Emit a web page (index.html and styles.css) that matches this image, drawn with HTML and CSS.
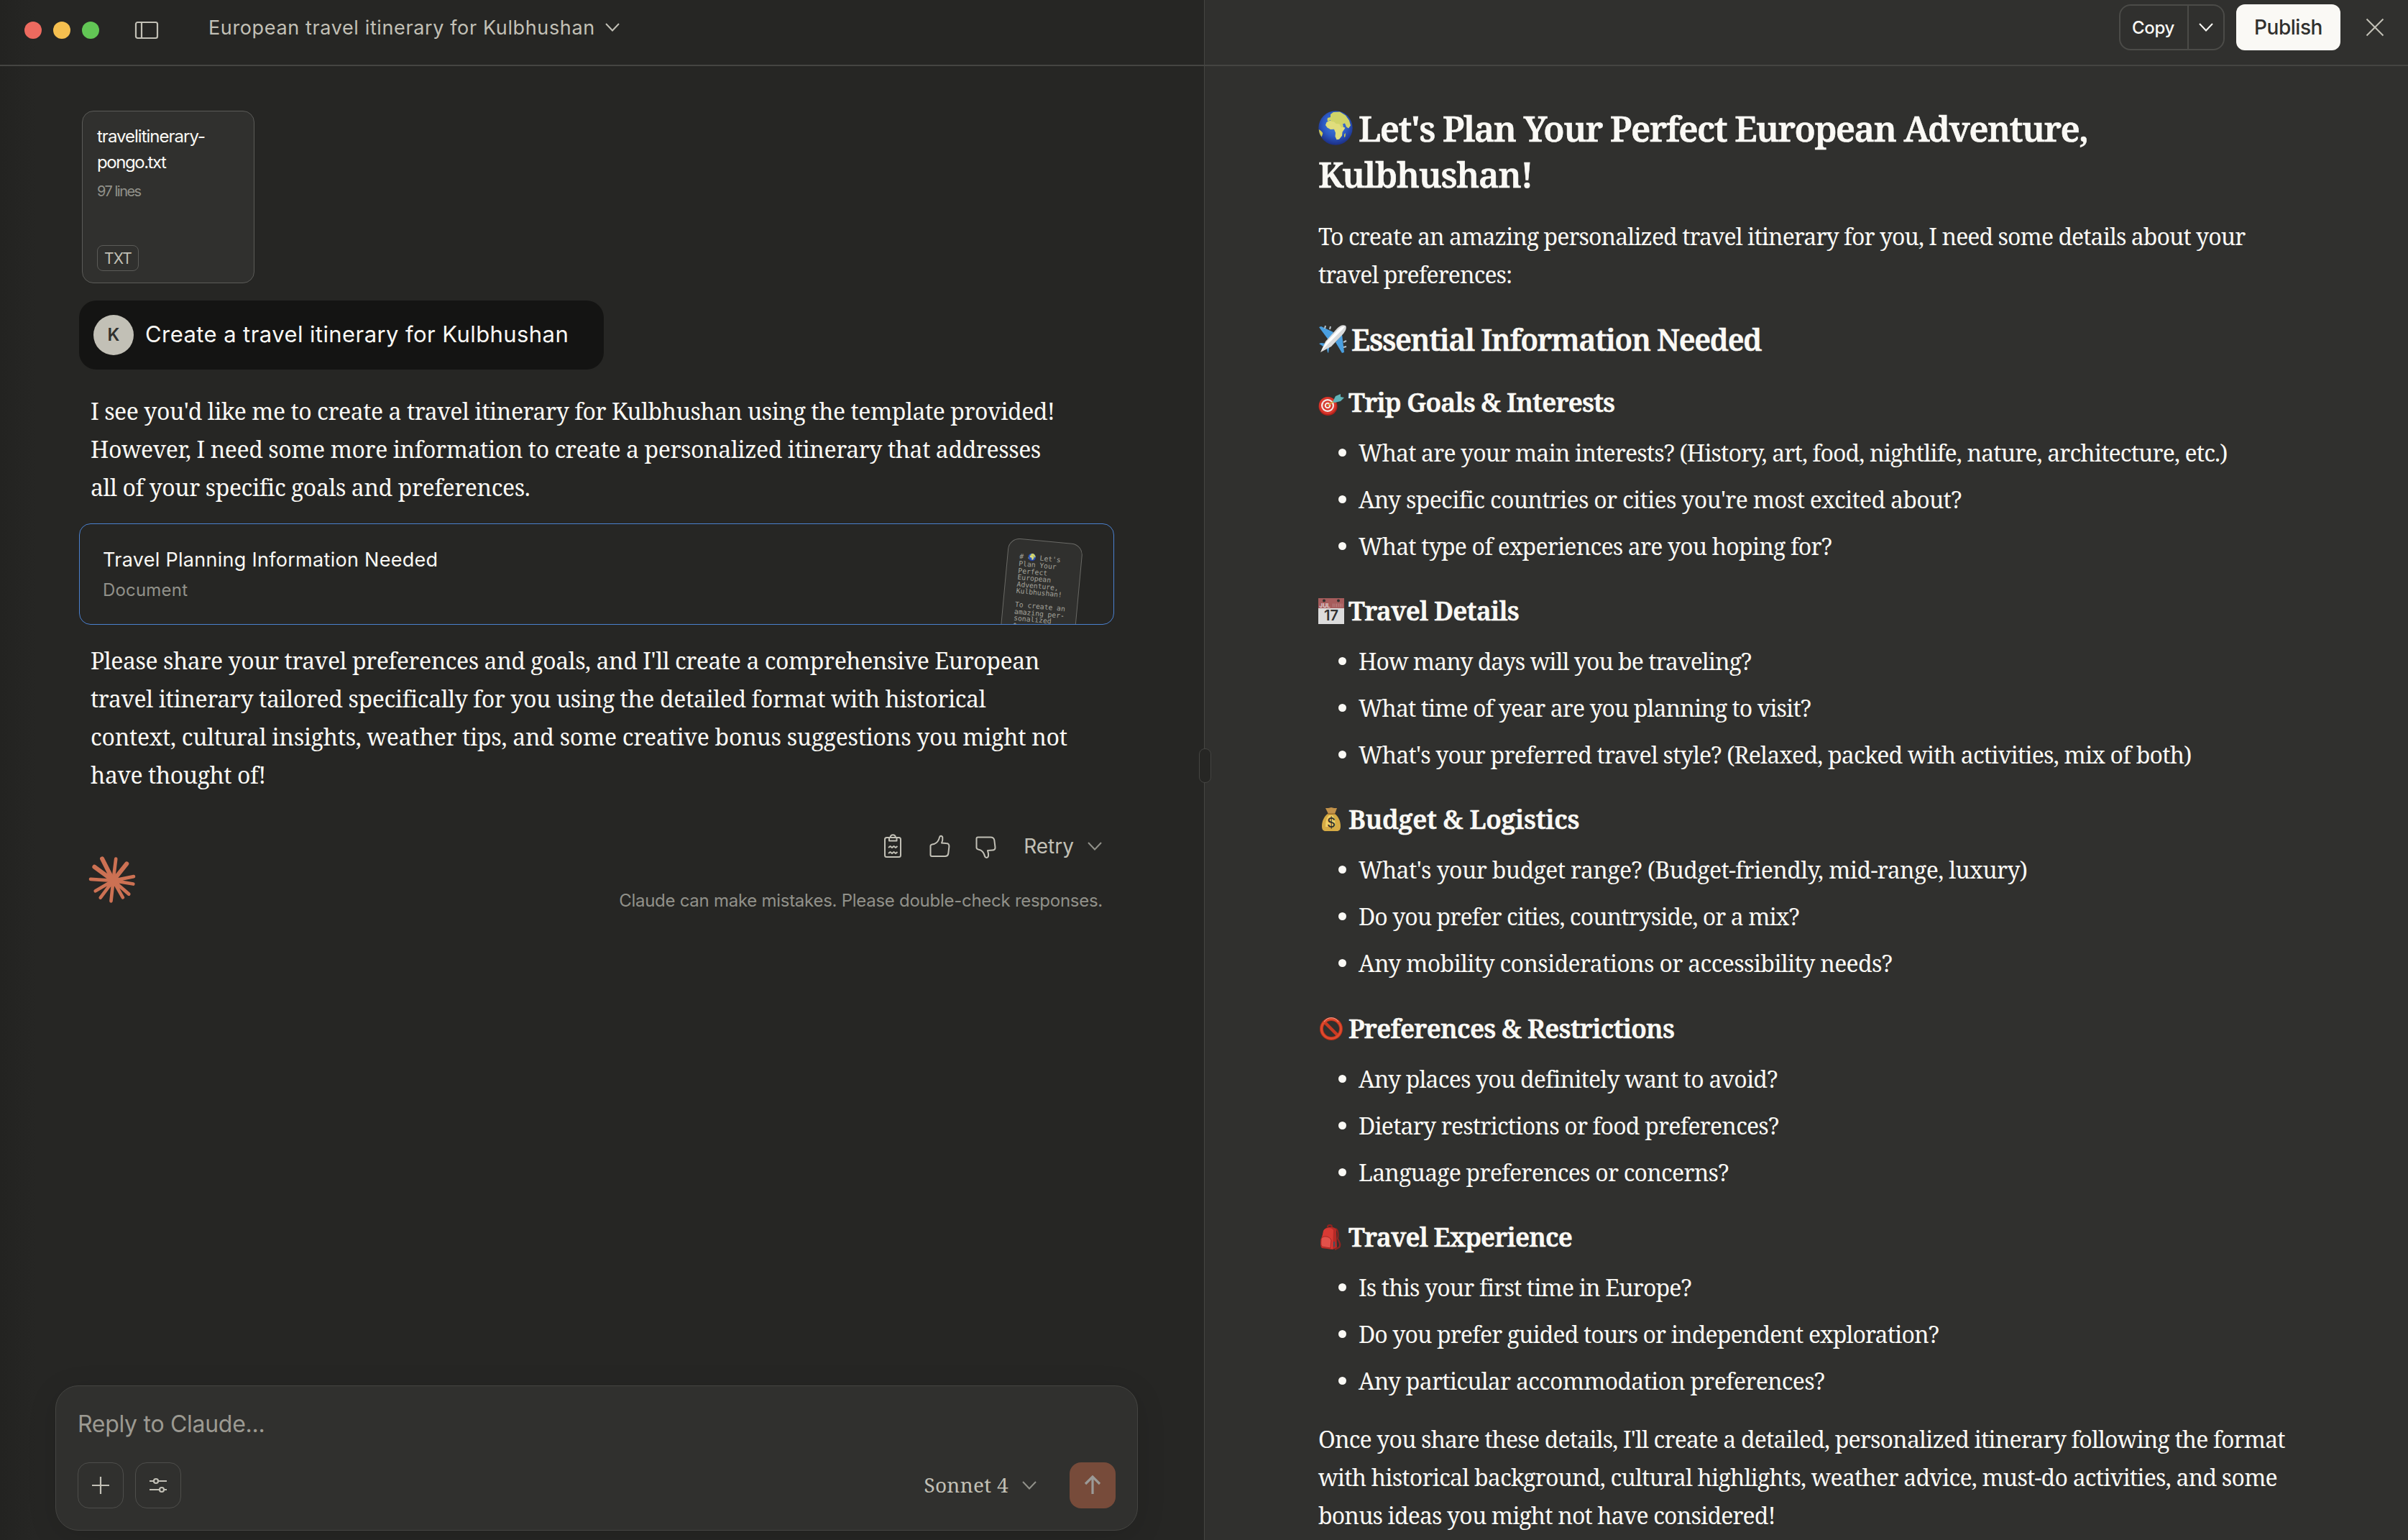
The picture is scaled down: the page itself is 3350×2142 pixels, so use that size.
FILE: index.html
```html
<!DOCTYPE html>
<html lang="en">
<head>
<meta charset="utf-8">
<title>European travel itinerary for Kulbhushan</title>
<link rel="stylesheet" href="styles.css">
</head>
<body>
<div class="window">
  <section class="chat">
    <header class="bar">
      <div class="lights"><i class="red"></i><i class="amber"></i><i class="green"></i></div>
      <svg class="panel-icon" viewBox="0 0 34 26" fill="none" stroke="currentColor" stroke-width="2.2"><rect x="2" y="2" width="30" height="22" rx="2.5"/><path d="M10 2v22"/></svg>
      <h1 class="title"><span class="ln wide63">European travel itinerary for Kulbhushan</span></h1>
      <svg class="chev" viewBox="0 0 20 12"><path d="M1 1l9 9.5L19 1"/></svg>
    </header>
    <main class="thread">
      <article class="file">
        <p class="file-name"><span class="ln tight100">travelitinerary-</span><span class="ln tight145">pongo.txt</span></p>
        <p class="file-size"><span class="ln tight150">97 lines</span></p>
        <span class="file-type"><span class="ln">TXT</span></span>
      </article>
      <div class="prompt"><span class="avatar">K</span><p><span class="ln wide42">Create a travel itinerary for Kulbhushan</span></p></div>
      <p class="reply first">
        <span class="ln tight46">I see you'd like me to create a travel itinerary for Kulbhushan using the template provided!</span>
        <span class="ln tight44">However, I need some more information to create a personalized itinerary that addresses</span>
        <span class="ln tight44">all of your specific goals and preferences.</span>
      </p>
      <article class="artifact">
        <div>
          <h2><span class="ln wide29">Travel Planning Information Needed</span></h2>
          <p><span class="ln wide19">Document</span></p>
        </div>
        <div class="thumb"><pre># <svg class="mini" viewBox="0 0 48 48"><use href="#globe"/></svg> Let's
Plan Your
Perfect
European
Adventure,
Kulbhushan!

To create an
amazing per-
sonalized
travel itin-</pre></div>
      </article>
      <p class="reply second">
        <span class="ln tight46">Please share your travel preferences and goals, and I'll create a comprehensive European</span>
        <span class="ln tight41">travel itinerary tailored specifically for you using the detailed format with historical</span>
        <span class="ln tight29">context, cultural insights, weather tips, and some creative bonus suggestions you might not</span>
        <span class="ln tight44">have thought of!</span>
      </p>
      <div class="after">
        <svg class="logo" viewBox="40 44 200 200"><g><path d="M143 148L154 58M143 148L228 131M143 148L226 162M143 148L208 204M143 148L183 218M143 148L134 233M143 148L90 219M143 148L69 191M143 148L49 142" stroke-width="14"/><path d="M143 148L97 57M143 148L199 78M143 148L65 91" stroke-width="18"/></g><circle cx="143" cy="148" r="23"/></svg>
        <div class="after-right">
          <div class="actions">
            <svg viewBox="0 0 32 36"><rect x="3" y="6" width="22" height="27" rx="2.5"/><path d="M9 6v4.5h10.500V6h-1.500c-.5-5-7-5-7.500 0zM8 20l2.500-2 2.500 2 2.500-2 2.500 2 2.500-2M8 28l2.500-2 2.500 2 2.500-2 2.500 2 2.500-2"/></svg>
            <svg viewBox="0 0 32 36"><path d="M2.500 17.500V30q0 2 2 2H23q3.500 0 4.200-3.200l1.200-10.300q.3-4.500-4-4.500l-6.400-.4q1.800-4 1.300-7.600c-.4-3-3.600-3-4.200-.6-.8 3.600-3 7.600-7 9.300-3 .8-5.600.3-5.600 2.800z"/></svg>
            <svg viewBox="0 0 32 36"><path d="M2.500 20V7.500q0-2 2-2H22q4.500 0 5.300 4l1.200 10q.3 4-4 4l-6.500.6q1.400 4 1 7.500c-.6 3-4.200 3-5 .3-1-4-2.500-6.800-6-8.500-3-.8-5.500-.9-5.500-3.400z"/></svg>
            <span class="retry"><span class="ln">Retry</span></span>
            <svg class="chev dim" viewBox="0 0 20 12"><path d="M1 1l9 9.500L19 1"/></svg>
          </div>
          <p class="note"><span class="ln tight27">Claude can make mistakes. Please double-check responses.</span></p>
        </div>
      </div>
    </main>
    <footer class="composer">
      <p class="placeholder"><span class="ln tight29">Reply to Claude...</span></p>
      <div class="tools">
        <span class="tool"><svg viewBox="0 0 26 26"><path d="M13 1v24M1 13h24"/></svg></span>
        <span class="tool"><svg viewBox="0 0 26 26"><path d="M1 7h6M13 7h12M1 19h14M21 19h4"/><circle cx="10" cy="7" r="3"/><circle cx="18" cy="19" r="3"/></svg></span>
        <span class="model"><span class="ln wide29">Sonnet 4</span></span>
        <svg class="chev dim" viewBox="0 0 20 12"><path d="M1 1l9 9.500L19 1"/></svg>
        <span class="send"><svg viewBox="0 0 24 28"><path d="M12 26V2M2 12L12 2l10 10"/></svg></span>
      </div>
    </footer>
  </section>
  <aside class="doc">
    <header class="bar doc-bar">
      <div class="copy"><span class="copy-label"><span class="ln tight29">Copy</span></span><span class="copy-more"><svg class="chev" viewBox="0 0 20 12"><path d="M1 1l9 9.500L19 1"/></svg></span></div>
      <span class="publish"><span class="ln tight46">Publish</span></span>
      <svg class="close" viewBox="0 0 26 26"><path d="M1.500 1.500l23 23M24.500 1.500l-23 23"/></svg>
    </header>
    <div class="page">
      <h1><span class="row"><svg class="emo" viewBox="0 0 48 48"><use href="#globe"/></svg><span class="ln tight159">Let's Plan Your Perfect European Adventure,</span></span><span class="ln tight129">Kulbhushan!</span></h1>
      <p>
        <span class="ln tight95">To create an amazing personalized travel itinerary for you, I need some details about your</span>
        <span class="ln tight97">travel preferences:</span>
      </p>
      <h2><svg class="emo" viewBox="0 0 40 40"><path fill="#4a9fe0" d="M1 3l3-1 17 8-6 12zM33 13l3 25-3 1-9-15zM1 26l3-1 8 1-2 6zM14 39l-1-1-2-9 5-3z"/><path stroke="#b9c4cc" stroke-width="2" d="M10 1l-1 4M17 2l-1 4M39 22l-4 2M39 30l-4 1"/><path fill="#d9dadb" d="M38 1c2 3 0 7-3 11L18 30 3 38l7-15L26 5c4-4 8-6 12-4z"/><path fill="#fff" d="M37 2c-4 0-7 2-10 5L11 24 4 36 34 6z"/></svg><span class="ln tight127">Essential Information Needed</span></h2>

      <h3><svg class="emo" viewBox="0 0 36 36"><circle cx="13.500" cy="23" r="13" fill="#b3221c"/><circle cx="13" cy="22" r="12" fill="#d8372c"/><circle cx="13" cy="22" r="9" fill="#f4e9e6"/><circle cx="13" cy="22" r="6.800" fill="#d8372c"/><circle cx="13" cy="22" r="4.300" fill="#f4e9e6"/><circle cx="13" cy="22" r="2.200" fill="#d8372c"/><path d="M13 22L28 12" stroke="#d9a63c" stroke-width="2"/><path fill="#5fb3b8" d="M20 17l4-8 7-3v4l5 1-5 5-8 2z"/></svg><span class="ln tight84">Trip Goals &amp; Interests</span></h3>
      <ul>
        <li><span class="ln tight88">What are your main interests? (History, art, food, nightlife, nature, architecture, etc.)</span></li>
        <li><span class="ln tight73">Any specific countries or cities you're most excited about?</span></li>
        <li><span class="ln tight84">What type of experiences are you hoping for?</span></li>
      </ul>

      <h3><svg class="emo" viewBox="0 0 36 36"><path fill="#dcdcdc" d="M0 0h36v36H0z"/><path fill="#a65c5c" d="M0 0h36v14H0z"/><circle cx="8" cy="3.500" r="2" fill="#30302e"/><circle cx="28" cy="3.500" r="2" fill="#30302e"/><text x="1.500" y="12.500" font-size="8" fill="#e8dcdc">JUL</text><path stroke="#b98080" stroke-dasharray="1 1.500" stroke-width="5" d="M20 10h14"/><text x="18" y="31" font-size="20" text-anchor="middle" fill="#333">17</text></svg><span class="ln tight78">Travel Details</span></h3>
      <ul>
        <li><span class="ln tight97">How many days will you be traveling?</span></li>
        <li><span class="ln tight95">What time of year are you planning to visit?</span></li>
        <li><span class="ln tight80">What's your preferred travel style? (Relaxed, packed with activities, mix of both)</span></li>
      </ul>

      <h3><svg class="emo" viewBox="0 0 36 36"><path fill="#c2924a" d="M10 2l4 0 4-1 4 1 4 0-3 8h-9z"/><path fill="#d6ab45" d="M13 10h10c5 4 8 10 8 17 0 5-2 7-5 7H10c-3 0-5-2-5-7 0-7 3-13 8-17z"/><path fill="#efcf66" d="M15 12h5c3 4 4 10 3 16H10c0-6 1-12 5-16z"/><path stroke="#9a6b2c" stroke-width="1.500" d="M13 10h10"/><text x="18" y="29" font-size="18" font-weight="500" text-anchor="middle" fill="#33302a">$</text></svg><span class="ln tight29">Budget &amp; Logistics</span></h3>
      <ul>
        <li><span class="ln tight61">What's your budget range? (Budget-friendly, mid-range, luxury)</span></li>
        <li><span class="ln tight95">Do you prefer cities, countryside, or a mix?</span></li>
        <li><span class="ln tight68">Any mobility considerations or accessibility needs?</span></li>
      </ul>

      <h3><svg class="emo" viewBox="0 0 36 36" fill="none"><circle cx="18" cy="18" r="13.500" stroke="#b5301c" stroke-width="5"/><path d="M8.500 8.500l19 19" stroke="#c93a22" stroke-width="4.500"/><circle cx="18" cy="18" r="13.500" stroke="#df4a2d" stroke-width="3"/><path d="M8 12a12 12 0 0 1 20 0" stroke="#f3a593" stroke-width="1" transform="translate(0 -4)"/></svg><span class="ln tight73">Preferences &amp; Restrictions</span></h3>
      <ul>
        <li><span class="ln tight84">Any places you definitely want to avoid?</span></li>
        <li><span class="ln tight84">Dietary restrictions or food preferences?</span></li>
        <li><span class="ln tight80">Language preferences or concerns?</span></li>
      </ul>

      <h3><svg class="emo" viewBox="0 0 36 36"><path fill="none" stroke="#8e2420" stroke-width="2.200" d="M24 6c4 2 4 8 3 14 2 4 5 8 2 12l-6 3M13 4c0-4 6-4 6 0"/><path fill="#b62a26" d="M8 8c2-5 14-6 17-1l1 25-6 3-15-2C2 30 3 24 4 20z"/><path fill="#d83a34" d="M7 9c2-5 12-5 14-1l-1 26-15-2c-2-3-1-8 0-12z"/><path fill="#e2514a" stroke="#a82420" d="M4 20c2-5 12-4 14 2l-1 11-12-2c-2-3-1-7-1-11z"/><path stroke="#46525e" stroke-width="2" d="M22 24v7"/></svg><span class="ln tight85">Travel Experience</span></h3>
      <ul>
        <li><span class="ln tight88">Is this your first time in Europe?</span></li>
        <li><span class="ln tight91">Do you prefer guided tours or independent exploration?</span></li>
        <li><span class="ln tight78">Any particular accommodation preferences?</span></li>
      </ul>
      <p class="closing">
        <span class="ln tight85">Once you share these details, I'll create a detailed, personalized itinerary following the format</span>
        <span class="ln tight80">with historical background, cultural highlights, weather advice, must-do activities, and some</span>
        <span class="ln tight88">bonus ideas you might not have considered!</span>
      </p>
    </div>
  </aside>
  <span class="handle"></span>
</div>
<svg class="defs"><defs>
  <radialGradient id="sea" cx=".5" cy=".4" r=".6"><stop offset="0" stop-color="#4a86dc"/><stop offset=".6" stop-color="#2c59c4"/><stop offset="1" stop-color="#1c2f86"/></radialGradient>
  <g id="globe"><circle cx="24" cy="24" r="23.700" fill="url(#sea)"/><path fill="#e0dd7c" d="M10 20l1.500-4 4-2 5-.3 2 1.500 5 .2 3 1.300 3 5.500 4 1.500-4 6-.5 5-4 5-3.500.6-2-4.600.5-5-2-5-5 .3-4.500-2.500z"/><path fill="#cfd368" d="M12.500 13l.5-3 4-1 0-4 4-3 9-.5 8 5 5 7 2 7-3 4-3-2-2-5-3 1 1 4-3 1-2.500-5-5-.5-2-2.500-4-.5-2-2-3 2z"/><path fill="#d0c94e" d="M.8 26l3 2 2.500 3-1.500 5.500C2 33 1 30 .8 26zM36 33l2-2-.5 5-1.500 1z"/></g>
</defs></svg>
</body>
</html>
```
FILE: styles.css
```css
* { box-sizing: border-box; margin: 0; padding: 0; }

:root {
  --sans: Inter, "Liberation Sans", sans-serif;
  --serif: "Noto Serif", "Liberation Serif", serif;
  --base: #262624;
  --raised: #30302e;
  --line: #454542;
  --text: #faf9f5;
  --soft: #c2c0b6;
  --muted: #91918a;
}

body { background: var(--base); color: var(--text); font-family: var(--sans); }
h1, h2, h3 { font-weight: inherit; font-size: inherit; }
svg { flex: none; display: block; }

.window { position: relative; display: flex; width: 3350px; height: 2142px; overflow: hidden; }
.ln { display: block; width: max-content; white-space: nowrap; }
.chev { width: 20px; height: 12px; fill: none; stroke: currentColor; stroke-width: 2; }
.chev.dim { color: #91918a; }
.defs { position: absolute; width: 0; height: 0; }

/* Tracking, in hundredths of a pixel */
.wide63 { letter-spacing: .63px; }
.wide42 { letter-spacing: .42px; }
.wide29 { letter-spacing: .29px; }
.wide19 { letter-spacing: .19px; }
.tight27 { letter-spacing: -.27px; }
.tight29 { letter-spacing: -.29px; }
.tight41 { letter-spacing: -.41px; }
.tight44 { letter-spacing: -.44px; }
.tight46 { letter-spacing: -.46px; }
.tight61 { letter-spacing: -.61px; }
.tight68 { letter-spacing: -.68px; }
.tight73 { letter-spacing: -.72px; }
.tight78 { letter-spacing: -.78px; }
.tight80 { letter-spacing: -.8px; }
.tight84 { letter-spacing: -.83px; }
.tight85 { letter-spacing: -.855px; }
.tight88 { letter-spacing: -.875px; }
.tight91 { letter-spacing: -.9px; }
.tight95 { letter-spacing: -.95px; }
.tight97 { letter-spacing: -.97px; }
.tight100 { letter-spacing: -1px; }
.tight127 { letter-spacing: -1.27px; }
.tight129 { letter-spacing: -1.29px; }
.tight145 { letter-spacing: -1.45px; }
.tight150 { letter-spacing: -1.5px; }
.tight159 { letter-spacing: -1.59px; }

/* Chat column */
.chat { width: 1675px; display: flex; flex-direction: column; background: linear-gradient(90deg, #232321, var(--base) 50px); }
.bar { display: flex; flex: none; height: 92px; border-bottom: 2px solid var(--line); color: var(--soft); }
.lights { display: flex; gap: 16px; margin: 30px 0 0 34px; }
.lights i { width: 24px; height: 24px; border-radius: 50%; }
.red { background: #ed6a5f; }
.amber { background: #f5bf4f; }
.green { background: #62c655; }
.panel-icon { width: 34px; height: 26px; margin: 29px 0 0 49px; }
.title { margin: 19px 0 0 69px; font-size: 27px; line-height: 40px; }
.bar > .chev { margin: 32px 0 0 14px; }

.thread { width: 1440px; margin-left: 110px; }
.file { display: flex; flex-direction: column; width: 240px; height: 240px; margin: 62px 0 0 4px; padding: 17px 20px 16px; border: 1px solid #5b5b58; border-radius: 16px; background: var(--raised); }
.file-name { font-size: 24px; line-height: 36px; }
.file-size { margin-top: 7px; font-size: 20px; line-height: 30px; color: var(--muted); }
.file-type { align-self: flex-start; display: flex; justify-content: center; width: 58px; height: 36px; margin-top: auto; font-size: 21px; line-height: 35px; letter-spacing: -.8px; color: var(--soft); border: 1px solid #5b5b58; border-radius: 8px; }

.prompt { display: flex; align-items: center; gap: 16px; width: 730px; height: 96px; margin-top: 24px; padding-left: 20px; border-radius: 24px; background: #141413; font-size: 31px; line-height: 48px; }
.prompt p { margin-top: -2px; }
.avatar { width: 56px; height: 56px; border-radius: 50%; background: var(--soft); color: #30302e; font-size: 24px; font-weight: 600; line-height: 56px; text-align: center; }

.reply { margin-left: 16px; font: 32px/53px var(--serif); }
.first { margin-top: 31px; }
.second { margin-top: 23px; }

.artifact { display: flex; justify-content: space-between; width: 1440px; height: 141px; margin-top: 24px; padding: 28px 49px 0 32px; overflow: hidden; border: 1px solid #4a80ce; border-radius: 16px; }
.artifact h2 { font-size: 27px; line-height: 44px; }
.artifact p { margin-top: 2px; font-size: 24px; line-height: 36px; color: var(--muted); }
.thumb { width: 104px; height: 160px; margin-top: -5px; padding: 18px 0 0 16px; border: 1px solid #6a6a66; border-radius: 16px; background: var(--raised); transform: rotate(5.300deg); }
.thumb pre { font: 9.700px/9.550px "DejaVu Sans Mono", "Liberation Mono", monospace; color: #a3a29a; }
.mini { display: inline-block; width: 11px; height: 11px; vertical-align: -2px; }

.after { display: flex; justify-content: space-between; margin-top: 53px; padding: 0 16px 0 13px; }
.logo { width: 67px; height: 67px; margin-top: 33px; stroke: #d97757; fill: #d97757; stroke-linecap: round; opacity: .93; }
.after-right { display: flex; flex-direction: column; align-items: flex-end; }
.actions { display: flex; align-items: center; height: 38px; margin-top: 1px; color: var(--soft); }
.actions svg:not(.chev) { width: 32px; height: 36px; margin-right: 32px; fill: none; stroke: currentColor; stroke-width: 2; stroke-linejoin: round; }
.retry { margin: 0 19px 0 4px; font-size: 28px; line-height: 38px; }
.actions .chev { margin-right: 1px; }
.note { margin-top: 39px; font-size: 24px; line-height: 36px; color: var(--muted); }

.composer { width: 1506px; height: 202px; margin: auto 0 13px 77px; padding: 29px 30px 0; border: 1px solid #454542; border-radius: 32px; background: var(--raised); box-shadow: 0 8px 40px rgba(0, 0, 0, .12); }
.placeholder { font-size: 32px; line-height: 48px; color: #9c9a92; }
.tools { display: flex; align-items: center; gap: 16px; margin-top: 29px; }
.tool { display: grid; place-items: center; width: 64px; height: 64px; border: 1px solid #4e4e4b; border-radius: 16px; color: var(--soft); }
.tool svg { width: 26px; height: 26px; fill: none; stroke: currentColor; stroke-width: 2.200; }
.model { margin: -2px 3px 0 auto; font: 28px/40px var(--serif); color: var(--soft); }
.send { display: grid; place-items: center; width: 64px; height: 64px; margin-left: 30px; border-radius: 16px; background: #774b3a; }
.send svg { width: 24px; height: 28px; fill: none; stroke: #9b9a97; stroke-width: 3.200; }

/* Document column */
.doc { flex: 1; display: flex; flex-direction: column; border-left: 1px solid #454542; background: var(--raised); }
.doc-bar { justify-content: flex-end; }
.copy { display: flex; width: 147px; height: 64px; margin-top: 6px; border: 2px solid #4b4b48; border-radius: 16px; color: var(--text); }
.copy-label { width: 95px; padding-left: 16px; border-right: 2px solid #4b4b48; font-size: 24px; font-weight: 500; line-height: 61px; }
.copy-more { padding: 24px 0 0 14px; }
.publish { width: 145px; height: 64px; margin: 6px 35px 0 16px; padding-left: 25px; border-radius: 12px; background: var(--text); color: #30302e; font-size: 28px; font-weight: 500; line-height: 64px; }
.close { width: 26px; height: 26px; margin: 25px 33px 0 0; fill: none; stroke: var(--soft); stroke-width: 2; }

.page { padding: 54px 0 0 158px; font: 32px/53px var(--serif); }
.page h1, .page h2, .page h3 { font-weight: 600; -webkit-text-stroke: .6px currentColor; }
.page h1 { font-size: 49px; line-height: 64px; }
.row, .page h2, .page h3 { display: flex; align-items: flex-start; }
.page > p { margin-top: 27.500px; }
.page h2 { margin-top: 35px; font-size: 41px; line-height: 58px; }
.page h3 { margin-top: 38.200px; font-size: 36px; line-height: 52px; }
.page h2 + h3 { margin-top: 33.500px; }
.emo { width: 36px; height: 36px; margin: 8px 6px 0 0; font-family: var(--sans); -webkit-text-stroke: 0; }
.page h1 .emo { width: 48px; height: 48px; margin: 8px 8px 0 0; }
.page h2 .emo { width: 40px; height: 40px; margin: 9px 6px 0 0; }
.page ul { list-style: none; margin-top: 17px; display: grid; gap: 12px; }
.page li { display: flex; align-items: center; gap: 17px; padding-left: 28px; }
.page li::before { content: ""; width: 11px; height: 11px; border-radius: 50%; background: var(--text); }
.page .closing { margin-top: 28px; }

/* Drag handle over the column divider */
.handle { position: absolute; left: 1668px; top: 1041px; width: 17px; height: 48px; border: 1px solid #454542; border-radius: 8px; background: var(--base); }
```
